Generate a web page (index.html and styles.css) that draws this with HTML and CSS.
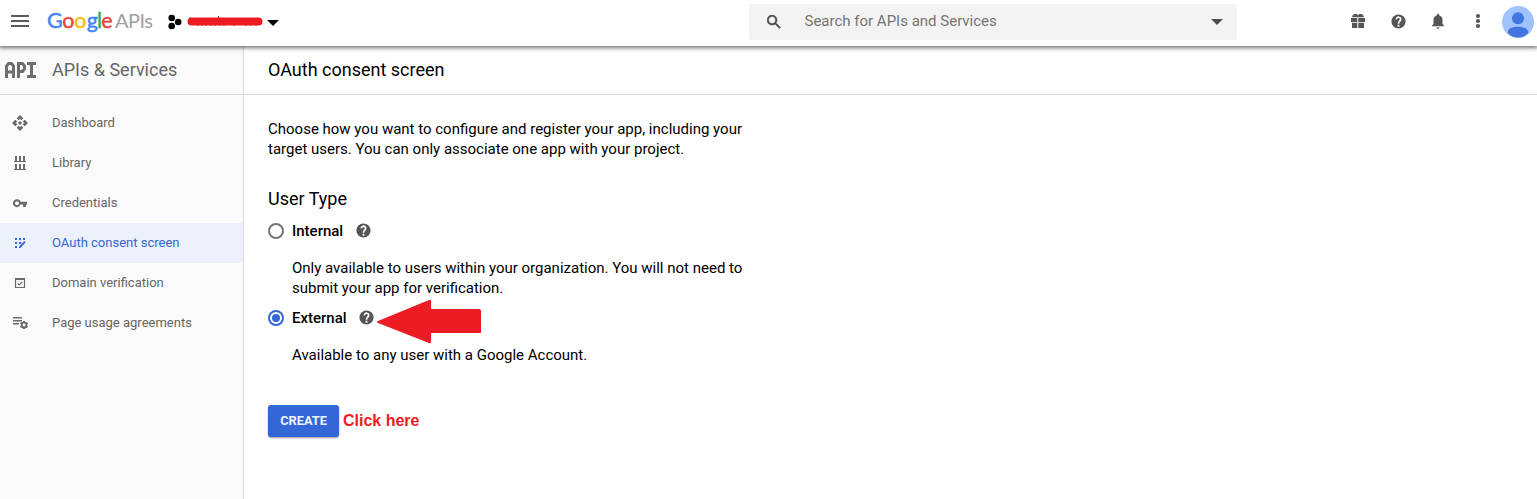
FILE: index.html
```html
<!DOCTYPE html>
<html lang="en">
<head>
<meta charset="utf-8">
<title>OAuth consent screen</title>
<link rel="stylesheet" href="styles.css">
</head>
<body>
<svg class="defs" width="0" height="0">
  <symbol id="help" viewBox="0 0 24 24"><circle cx="12" cy="12" r="10"/><path d="M9 9a3 3 0 1 1 5.300 1.900C13.200 12 12 12.500 12 15M12 16.500v3" fill="none" stroke="#fff" stroke-width="2.400"/></symbol>
</svg>
<header class="topbar">
  <svg class="menu" viewBox="0 0 18 12"><path d="M0 0h18v2H0zM0 5h18v2H0zM0 10h18v2H0z"/></svg>
  <svg class="logo" viewBox="0 0 110 36">
    <g class="google"><text x="0" y="23" fill="#4285f4" stroke="#4285f4">G</text><text x="15.300" y="23" fill="#ea4335" stroke="#ea4335">o</text><text x="27.300" y="23" fill="#fbbc05" stroke="#fbbc05">o</text><text x="39.700" y="23" fill="#4285f4" stroke="#4285f4">g</text><text x="50" y="23" fill="#34a853" stroke="#34a853">l</text><text x="54.200" y="23" fill="#ea4335" stroke="#ea4335">e</text></g>
    <text class="apis" x="68" y="22.500" textLength="38">APIs</text>
  </svg>
  <svg class="project" viewBox="0 0 112 20">
    <circle cx="3.700" cy="5" r="3.300"/><circle cx="3.700" cy="13" r="3.300"/><circle cx="10.200" cy="9" r="3.300"/>
    <path d="M22 4v8M50.500 3v2M30 11v2M34 11v2M38 11v2M43 11v2M47 11v2M52 11v2M56 11v2M66 11v2M78 11v2M83 11v2M88 11v2" stroke="#633" stroke-width="1"/>
    <path d="M23.500 8.500h67" stroke="#ed1c24" stroke-width="8" stroke-linecap="round"/>
    <path d="M99 7h12l-6 6z"/>
  </svg>
  <div class="search">
    <svg class="magnifier" viewBox="3 3 18 18"><path d="M15.500 14h-.79l-.28-.27A6.471 6.471 0 0 0 16 9.500 6.500 6.500 0 1 0 9.500 16c1.610 0 3.090-.59 4.230-1.570l.27.28v.79l5 4.990L20.490 19l-4.990-5zm-6 0C7.010 14 5 11.990 5 9.500S7.010 5 9.500 5 14 7.010 14 9.500 11.990 14 9.500 14z" stroke="#4d4d4d" stroke-width=".6"/></svg>
    <span>Search for APIs and Services</span>
    <svg class="caret" viewBox="0 0 12 6"><path d="M0 0h12L6 6z"/></svg>
  </div>
  <nav class="tools">
    <svg viewBox="0 0 16 16"><path d="M1 5h6.300v4H1zM8.300 5H15v4H8.300zM2 9.800h5.300V15H2zM8.300 9.800H14V15H8.300zM2.200 2.600h11.600v1.700H2.200zM3.500 1h3.200L8 2.300 9.300 1h3.200v1.700h-9z"/></svg>
    <svg class="help-top"><use href="#help"/></svg>
    <svg viewBox="0 0 16 16"><path d="M8 15.800c.8 0 1.500-.6 1.500-1.400h-3c0 .8.700 1.400 1.500 1.400zM12.500 11V7c0-2.300-1.300-4.100-3.400-4.700V1.800a1.100 1.100 0 0 0-2.200 0v.5C4.800 2.900 3.500 4.700 3.500 7v4L2 12.400v.8h12v-.8z"/></svg>
    <svg viewBox="0 0 16 16"><circle cx="8" cy="3" r="2.100"/><circle cx="8" cy="8" r="2.100"/><circle cx="8" cy="13" r="2.100"/></svg>
  </nav>
  <svg class="avatar" viewBox="0 0 32 32"><defs><clipPath id="round"><circle cx="16" cy="16" r="16"/></clipPath></defs><circle cx="16" cy="16" r="16" fill="#a0c2ff"/><g fill="#4175df" clip-path="url(#round)"><circle cx="16" cy="12.200" r="6"/><path d="M5.800 27c0-5 5-6.200 10.200-6.200S26.200 22 26.200 27c-3 3-6 4.500-10.200 4.500S8.500 30 5.800 27z"/></g></svg>
</header>
<div class="page">
  <aside class="sidebar">
    <div class="section-title">
      <svg class="api" viewBox="0 0 32 16" fill="none" stroke="#6e6e6e" stroke-width="3"><path d="M1.500 16V4l2-2.500h3L8.500 4v12M1.500 10h7M13.500 16V1.500h4L19.500 4v3l-2 2.500h-4M22 1.500h9M22 14.500h9M26.500 1v14"/></svg>
      <span>APIs &amp; Services</span>
    </div>
    <ul class="nav">
      <li><svg viewBox="0 0 16 16"><circle cx="8" cy="8" r="1.700"/><path d="M8 0l3.300 3.300-1.800 2L8 3.900 6.500 5.300l-1.800-2zM8 16l3.300-3.300-1.800-2L8 12.100l-1.500-1.400-1.800 2zM0 8l3.300-3.300 2 1.800L3.900 8l1.400 1.500-2 1.800zM16 8l-3.300-3.300-2 1.800L12.100 8l-1.400 1.500 2 1.800z"/></svg><span>Dashboard</span></li>
      <li><svg viewBox="0 0 16 16"><path d="M3 1h2v5H3zM7 1h2v5H7zM11 1h2v5h-2zM2 6h12v1H2zM3 9h2v5H3zM7 9h2v5H7zM11 9h2v5h-2zM2 14h12v1H2z"/></svg><span>Library</span></li>
      <li><svg viewBox="0 0 16 16"><path fill-rule="evenodd" d="M8.600 6.700A4 4 0 1 0 8.600 9.600H11v2.400h3V9.600h1V6.700zM5 6.200a2 2 0 1 1 0 4 2 2 0 0 1 0-4z"/></svg><span>Credentials</span></li>
      <li class="active"><svg viewBox="0 0 16 16"><path d="M3 3h2v2H3zM7 3h2v2H7zM11 3h2v2h-2zM3 7h2v2H3zM7 7h2v2H7zM3 11h2v2H3z"/><path d="M7 13v-1.500L12.400 6l1.300 1.300L8.500 13z"/></svg><span>OAuth consent screen</span></li>
      <li><svg viewBox="0 0 16 16" fill="none" stroke="#6b6b6b"><path d="M3.500 3.500h9v9h-9z" stroke-width="1.200"/><path d="M3 4h10" stroke-width="2"/><path d="M5.700 8.500L7.200 10l3.200-3.200" stroke-width="1.100"/></svg><span>Domain verification</span></li>
      <li><svg viewBox="0 0 16 16"><path d="M1 2h9v1.500H1zM1 5h9v1.500H1zM1 8h6v1.500H1z"/><circle cx="12" cy="10" r="2.400" fill="none" stroke="#6b6b6b" stroke-width="1.900"/><path d="M11 6h2v1.500h-2zM11 12.500h2V14h-2zM8 8.500L9 6.900l1.500.9-1 1.600zM16 8.500l-1-1.600-1.500.9 1 1.600zM8 11.500l1 1.600 1.500-.9-1-1.600zM16 11.500l-1 1.600-1.500-.9 1-1.600z"/></svg><span>Page usage agreements</span></li>
    </ul>
  </aside>
  <main>
    <h1>OAuth consent screen</h1>
    <section class="content">
      <p class="intro">Choose how you want to configure and register your app, including your<br>target users. You can only associate one app with your project.</p>
      <h2>User Type</h2>
      <div class="option"><i class="radio"></i><b>Internal</b><svg><use href="#help"/></svg></div>
      <p class="detail">Only available to users within your organization. You will not need to<br>submit your app for verification.</p>
      <div class="option external"><i class="radio checked"></i><b>External</b><svg><use href="#help"/></svg>
        <svg class="arrow" viewBox="0 0 106 46"><path d="M2 22L53 1q2-1 2 1v8h48q2 0 2 2v22H55v9q0 2-2 1L2 24q-2-1 0-2z"/></svg>
      </div>
      <p class="detail">Available to any user with a Google Account.</p>
      <div class="actions"><button>CREATE</button><strong>Click here</strong></div>
    </section>
  </main>
</div>
</body>
</html>
```
FILE: styles.css
```css
* { box-sizing: border-box; }
body { margin: 0; height: 499px; overflow: hidden; background: #fff; font: 15px/20px Roboto, sans-serif; color: #000; }
svg { display: block; flex: none; }
.defs { position: absolute; }
h1, h2, p, ul { margin: 0; padding: 0; font-weight: 400; }
.topbar { position: relative; display: flex; height: 46px; background: #fff; box-shadow: 0 1px 4px 1px rgba(0,0,0,.55); }
.menu { width: 18px; height: 12px; margin: 15px 0 0 11px; fill: #5a5a5a; }
.logo { width: 110px; height: 36px; margin: 5px 0 0 18px; font-family: Lato, sans-serif; font-size: 21.5px; }
.google { stroke-width: .45; }
.apis { fill: #a0a0a0; font-size: 20px; font-weight: 400; }
.project { width: 112px; height: 20px; margin: 13px 0 0 11px; }
.search { display: flex; width: 488px; height: 36px; margin: 4px 0 0 469px; border-radius: 2px; background: #f3f3f3; color: #757575; font-size: 15px; line-height: 34px; }
.magnifier { width: 14px; height: 14px; margin: 11px 0 0 18px; fill: #4d4d4d; }
.search span { margin-left: 23.5px; white-space: nowrap; }
.caret { width: 12px; height: 6px; margin: 15px 14px 0 auto; fill: #4d4d4d; }
.tools { display: flex; gap: 24px; margin: 13px 0 0 113px; fill: #555; color: #555; }
.tools svg { width: 16px; height: 16px; }
.tools .help-top { width: 17px; height: 17px; margin: -.5px -.5px 0; }
.avatar { width: 32px; height: 32px; margin: 6px 0 0 16px; }
.page { display: flex; height: 453px; }
.sidebar { flex: none; width: 244px; border-right: 1px solid #dcdcdc; background: #fafafa; color: #666; }
.section-title { display: flex; height: 49px; padding: 14px 0 0 5px; border-bottom: 1px solid #dcdcdc; font-size: 18px; }
.api { width: 32px; height: 16px; margin: 2px 15px 0 0; }
.nav { padding-top: 8px; list-style: none; font-size: 13px; }
.nav li { display: flex; align-items: center; height: 40px; padding: 0 12px; gap: 24px; fill: #6b6b6b; }
.nav svg { width: 16px; height: 16px; }
.nav .active { background: #ebf0fa; color: #3367d6; fill: #3367d6; }
main { flex: 1; }
h1 { height: 49px; padding: 14px 24px 0; border-bottom: 1px solid #dcdcdc; font-size: 18px; line-height: 20px; }
.content { padding: 24px; white-space: nowrap; }
h2 { margin: 30px 0 12px; font-size: 18px; line-height: 20px; }
.option { position: relative; display: flex; height: 20px; color: #555; fill: #555; }
.option b { margin: 0 11.5px 0 8px; color: #000; font-weight: 500; }
.option svg { width: 17px; height: 17px; margin-top: .5px; }
.option .arrow { position: absolute; left: 108px; top: -9px; width: 106px; height: 46px; margin: 0; fill: #ed1c24; }
.radio { width: 16px; height: 16px; margin-top: 2px; border: 2px solid #757575; border-radius: 50%; }
.radio.checked { padding: 2px; border-color: #3367d6; background: #3367d6 content-box; }
.detail { margin: 17px 0 10px 24px; }
.actions { display: flex; align-items: center; gap: 4px; margin-top: 40px; }
button { width: 71px; height: 32px; padding: 0; border: 0; border-radius: 3px; background: #3367d6; box-shadow: 0 1px 2px rgba(0,0,0,.4); color: #f0f4fc; font: 700 12.8px/32px Roboto, sans-serif; }
.actions strong { color: #ed1c24; font: 700 16px/20px "Liberation Sans", Arial, sans-serif; }
```
